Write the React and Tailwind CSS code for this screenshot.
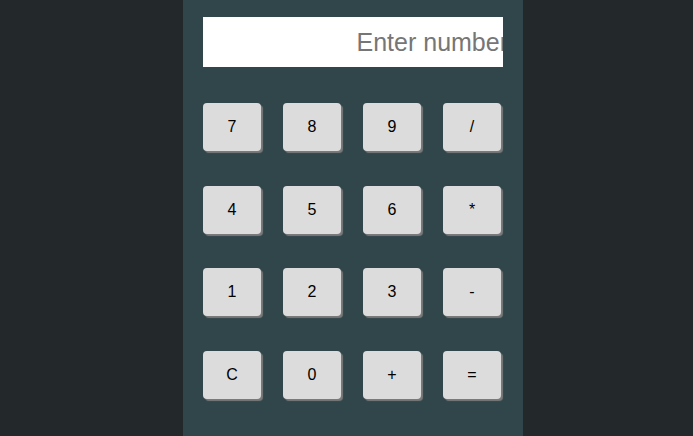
const KEYS = ['7', '8', '9', '/', '4', '5', '6', '*', '1', '2', '3', '-', 'C', '0', '+', '='];

function Key({ label }) {
  return (
    <button className="w-[58px] h-[48px] rounded-[4px] bg-[#dcdcdc] text-black text-[16px] shadow-[2px_2px_1px_#7a7a7a] flex items-center justify-center">
      {label}
    </button>
  );
}

export default function App() {
  return (
    <div className="w-[693px] h-[436px] bg-[#23282b] flex pl-[183px] font-['Liberation_Sans',Arial,sans-serif]">
      <div className="w-[340px] h-full bg-[#30464a] px-5 pt-[17px]">
        {/* display */}
        <div className="w-[300px] h-[50px] bg-white overflow-hidden">
          <input
            type="text"
            placeholder="Enter number"
            className="w-[305px] h-[50px] text-right text-[25px] outline-none bg-transparent placeholder:text-[#767676] text-black"
          />
        </div>

        {/* keypad */}
        <div className="mt-9 grid grid-cols-[repeat(4,60px)] auto-rows-[50px] gap-x-5 gap-y-[32.5px]">
          {KEYS.map(k => (
            <Key key={k} label={k} />
          ))}
        </div>
      </div>
    </div>
  );
}
